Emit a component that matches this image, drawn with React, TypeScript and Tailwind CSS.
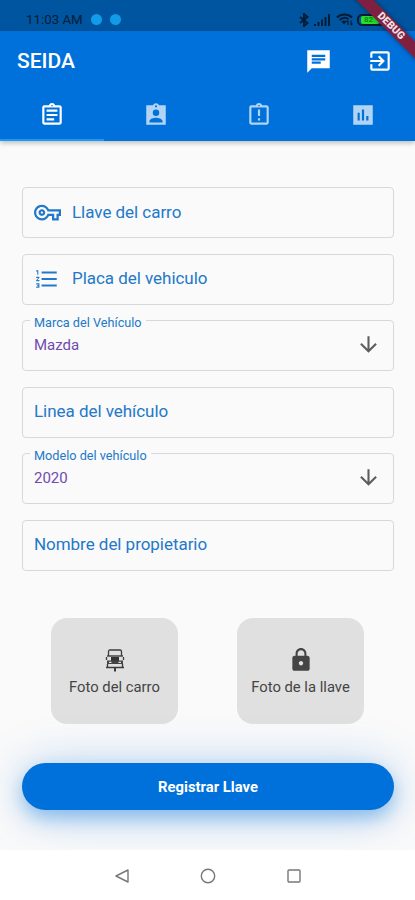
import clsx from "clsx"
import type { ReactNode } from "react"
import {
    MdArrowDownward,
    MdExitToApp,
    MdFormatListNumbered,
    MdLock,
    MdOutlineAssignment,
    MdOutlineAssignmentLate,
    MdOutlineVpnKey
} from "react-icons/md"

const ChatIcon = () => (
    <svg width="27" height="27" viewBox="0 0 24 24" fill="currentColor">
        <path d="M2 2h20v16H6l-4 4zm4 7v2h12V9zm8 5v-2H6v2zm4-6V6H6v2z" />
    </svg>
)

const PersonBoardIcon = () => (
    <svg width="26" height="26" viewBox="0 0 24 24" fill="currentColor">
        <path
            fillRule="evenodd"
            d="M3 3h6.200a3 3 0 0 1 5.600 0H21v18H3zM12 3a1 1 0 1 0 0 2 1 1 0 0 0 0-2M12 7a3 3 0 1 0 0 6 3 3 0 0 0 0-6M6 19h12v-1.400c0-2-4-3.100-6-3.100s-6 1.100-6 3.100z"
        />
    </svg>
)

const ChartIcon = () => (
    <svg width="26" height="26" viewBox="0 0 24 24" fill="currentColor">
        <path fillRule="evenodd" d="M3 3h18v18H3zM7 10v7h2v-7zM11 7v10h2V7zM15 13v4h2v-4z" />
    </svg>
)

const TABS = [
    { label: "Registro", icon: <MdOutlineAssignment size={26} /> },
    { label: "Propietario", icon: <PersonBoardIcon /> },
    { label: "Alertas", icon: <MdOutlineAssignmentLate size={26} /> },
    { label: "Reportes", icon: <ChartIcon /> }
]

const BluetoothIcon = () => (
    <svg width="10" height="14" viewBox="0 0 10 14" fill="none" stroke="currentColor">
        <path d="M1 4l7.500 6L5 13V1l3.500 3L1 10" strokeWidth="1.900" />
    </svg>
)

const SignalIcon = () => (
    <svg width="16" height="12" viewBox="0 0 16 12" fill="currentColor">
        <path d="M0 10h2v2H0zM3.500 8h2v4h-2zM7 5.500h2V12H7zM10.500 3h2v9h-2zM14 0h2v12h-2z" />
    </svg>
)

const WifiIcon = () => (
    <svg width="17" height="13" viewBox="0 0 17 13" fill="none" stroke="currentColor">
        <path d="M1 4.500C5 .5 12 .5 16 4.500" strokeWidth="1.900" />
        <path d="M3.500 7C6.500 4.300 10 4.300 12.500 6" strokeWidth="1.900" />
        <path d="M5.500 8.500q2.500-2 5 0L8 11.500z" fill="currentColor" stroke="none" />
        <path d="M12 12V7.500m-1.500 1.500L12 7.500M15 7.500V12m1.500-1.500L15 12" strokeWidth="1.200" />
    </svg>
)

const CarIcon = () => (
    <svg width="20" height="23" viewBox="0 0 20 23" fill="none" stroke="#3c3c3c">
        <path d="M3.500 7V2.500Q3.500 1 5 1h10q1.500 0 1.500 1.500V7" strokeWidth="1.300" />
        <path d="M1.500 8v3M18.500 8v3" strokeWidth="1.300" />
        <path d="M2 7h16" strokeWidth="1.400" />
        <path d="M6 8h8v4H6z" fill="#333" stroke="none" />
        <path d="M2 11.500h16V15H2z" fill="#444" stroke="none" />
        <path d="M4 13.300h2.500M13.500 13.300H16" stroke="#dfdfdf" strokeWidth="1.200" />
        <path d="M2.500 15v3.500M17.500 15v3.500M1 18.500h18" strokeWidth="1.400" />
        <path d="M10 18v4.500" strokeWidth="2" />
    </svg>
)

const StatusBar = () => (
    <div className="h-[31px] overflow-hidden bg-[#0055a0] text-[#071c35]">
        <div className="flex h-full items-center justify-between pt-2 pr-[26px] pl-[26px]">
            <div className="flex items-center">
                <span className="w-[57px] whitespace-nowrap text-[13.300px] leading-4">
                    11:03 AM
                </span>
                <span className="ml-[8px] size-[11px] rounded-full bg-[#129be8]" />
                <span className="ml-[8px] size-[11px] rounded-full bg-[#129be8]" />
            </div>
            <div className="flex items-center">
                <BluetoothIcon />
                <span className="ml-[5px]">
                    <SignalIcon />
                </span>
                <span className="ml-[6px]">
                    <WifiIcon />
                </span>
                <div className="ml-[4px] flex h-[12px] w-[32px] items-center rounded-[5px] border-2 border-[#071c35] pl-[2px]">
                    <span className="flex h-[8px] w-[18px] items-center rounded-[2px] bg-[#25e225] pl-[3px] font-bold text-[#108a20] text-[8px] leading-none">
                        82
                    </span>
                </div>
            </div>
        </div>
    </div>
)

const DebugBanner = () => (
    <div className="pointer-events-none absolute top-0 right-0 z-20 size-[70px] overflow-hidden">
        <div className="absolute top-[19.500px] -left-[10.500px] flex h-[12px] w-[112px] rotate-45 items-center justify-center bg-[#802040] font-black text-[#eee0e6] text-[10.500px] leading-none shadow-[0_0_5px_rgba(0,0,0,0.4)]">
            DEBUG
        </div>
    </div>
)

const AppBar = () => (
    <header className="relative z-10 h-[110px] bg-[#0071db] text-white shadow-[0_2px_5px_rgba(0,0,0,0.25)]">
        <div className="flex h-[61px] items-center justify-between pr-[22px] pl-[17px]">
            <h1 className="pt-px font-medium text-[21px]">SEIDA</h1>
            <div className="flex items-center gap-[35px]">
                <button type="button" aria-label="Mensajes">
                    <ChatIcon />
                </button>
                <button type="button" aria-label="Salir" className="pb-px">
                    <MdExitToApp size={26} />
                </button>
            </div>
        </div>
        <nav className="grid h-[49px] grid-cols-4">
            {TABS.map(({ label, icon }, i) => (
                <button
                    key={label}
                    type="button"
                    aria-label={label}
                    className={clsx(
                        "flex items-center justify-center border-b-2 pb-px",
                        i === 0 ? "border-[#2196f3]" : "border-transparent text-[#b2d4f4]"
                    )}
                >
                    {icon}
                </button>
            ))}
        </nav>
    </header>
)

const Field = ({ label, icon }: { label: string; icon?: ReactNode }) => (
    <div className="flex h-[51px] items-center rounded-[4px] border border-[#d8d8d8] pl-[11px] text-[#2378c8] text-[17px]">
        {icon && <span className="flex w-[38px] items-center">{icon}</span>}
        <span className="tracking-[-0.040px]">{label}</span>
    </div>
)

const SelectField = ({ label, value }: { label: string; value: string }) => (
    <fieldset className="mt-[-6px] h-[57px] min-w-0 rounded-[4px] border border-[#d8d8d8] pr-[12px] pl-[7px]">
        <legend className="h-[13px] whitespace-nowrap px-[4px] text-[#2378c8] text-[12.700px] leading-[18px]">
            {label}
        </legend>
        <div className="flex h-[35px] items-center justify-between pl-[4px]">
            <span className="pt-px text-[#704bb0] text-[15px]">{value}</span>
            <MdArrowDownward size={25} className="text-[#5d5d5d]" />
        </div>
    </fieldset>
)

const PhotoButton = ({ label, icon }: { label: string; icon: ReactNode }) => (
    <button
        type="button"
        className="flex h-[106px] w-[127px] flex-col items-center rounded-[16px] bg-[#e0e0e0] pt-[28px] text-[#444]"
    >
        <span className="flex h-[29px] items-center justify-center">{icon}</span>
        <span className="whitespace-nowrap text-[14.800px] leading-[24px]">{label}</span>
    </button>
)

const SystemNav = () => (
    <div className="relative flex h-[50px] items-center justify-center gap-[70px] bg-white pt-[2px]">
        <svg width="16" height="16" viewBox="0 0 16 16" fill="none" stroke="#777" strokeWidth="1.400">
            <path d="M14 2v12L2 8z" strokeLinejoin="round" />
        </svg>
        <svg width="16" height="16" viewBox="0 0 16 16" fill="none" stroke="#777" strokeWidth="1.400">
            <circle cx="8" cy="8" r="6.700" />
        </svg>
        <svg width="16" height="16" viewBox="0 0 16 16" fill="none" stroke="#777" strokeWidth="1.400">
            <rect x="2" y="2" width="12" height="12" rx="1" />
        </svg>
    </div>
)

export default function App() {
    return (
        <div className="relative flex h-[900px] w-[415px] flex-col overflow-hidden bg-[#fafafa] font-[Roboto,sans-serif]">
            <StatusBar />
            <AppBar />
            <main className="flex-1 pt-[46px] pr-[21px] pl-[22px]">
                <form className="flex flex-col gap-[15.500px]">
                    <Field label="Llave del carro" icon={<MdOutlineVpnKey size={27} />} />
                    <Field label="Placa del vehiculo" icon={<MdFormatListNumbered size={26} />} />
                    <SelectField label="Marca del Vehículo" value="Mazda" />
                    <Field label="Linea del vehículo" />
                    <SelectField label="Modelo del vehículo" value="2020" />
                    <Field label="Nombre del propietario" />
                </form>
                <div className="mt-[47px] flex justify-between pr-[30px] pl-[29px]">
                    <PhotoButton label="Foto del carro" icon={<CarIcon />} />
                    <PhotoButton label="Foto de la llave" icon={<MdLock size={26} />} />
                </div>
                <button
                    type="button"
                    className="mt-[39px] h-[47px] w-full rounded-full bg-[#0071db] pt-[2px] font-bold text-[14.800px] text-white shadow-[0_8px_18px_rgba(0,113,219,0.35),0_4px_50px_rgba(0,113,219,0.3)]"
                >
                    Registrar Llave
                </button>
            </main>
            <SystemNav />
            <DebugBanner />
        </div>
    )
}
